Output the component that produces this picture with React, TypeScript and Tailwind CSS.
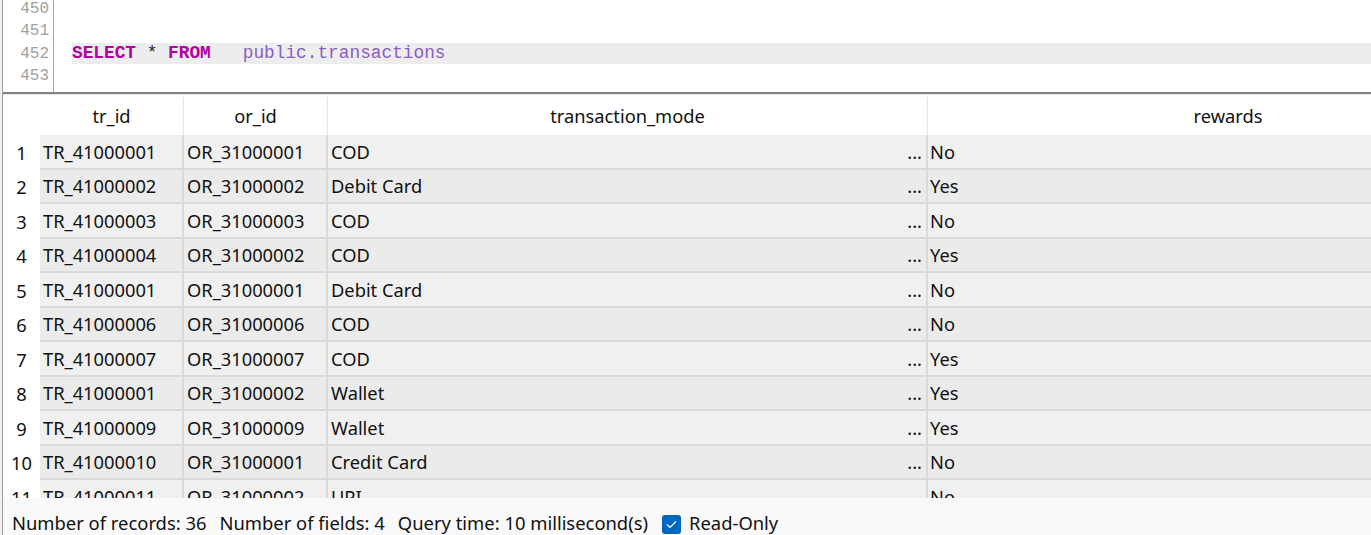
import React from "react";

type Row = {
  tr: string;
  or: string;
  mode: string;
  rewards: string;
};

const rows: Row[] = [
  { tr: "TR_41000001", or: "OR_31000001", mode: "COD", rewards: "No" },
  { tr: "TR_41000002", or: "OR_31000002", mode: "Debit Card", rewards: "Yes" },
  { tr: "TR_41000003", or: "OR_31000003", mode: "COD", rewards: "No" },
  { tr: "TR_41000004", or: "OR_31000002", mode: "COD", rewards: "Yes" },
  { tr: "TR_41000001", or: "OR_31000001", mode: "Debit Card", rewards: "No" },
  { tr: "TR_41000006", or: "OR_31000006", mode: "COD", rewards: "No" },
  { tr: "TR_41000007", or: "OR_31000007", mode: "COD", rewards: "Yes" },
  { tr: "TR_41000001", or: "OR_31000002", mode: "Wallet", rewards: "Yes" },
  { tr: "TR_41000009", or: "OR_31000009", mode: "Wallet", rewards: "Yes" },
  { tr: "TR_41000010", or: "OR_31000001", mode: "Credit Card", rewards: "No" },
  { tr: "TR_41000011", or: "OR_31000002", mode: "UPI", rewards: "No" },
];

const uiFont = { fontFamily: '"Noto Sans", "Open Sans", sans-serif' };
const monoFont = { fontFamily: '"Liberation Mono", "DejaVu Sans Mono", monospace' };

function Editor() {
  const lines = [450, 451, 452, 453];
  return (
    <div className="flex h-[94px] shrink-0 overflow-hidden border-b-2 border-[#828282] bg-white">
      {/* line numbers */}
      <div
        className="w-[51px] shrink-0 border-r border-[#a8a8a8] pr-[4px] text-right text-[16px] text-[#a0a0a0]"
        style={monoFont}
      >
        <div className="mt-[-2px]">
          <div className="h-[22px] leading-[22px]">{lines[0]}</div>
          <div className="h-[23px] leading-[23px]">{lines[1]}</div>
          <div className="h-[22px] leading-[22px]">{lines[2]}</div>
          <div className="h-[22px] leading-[22px]">{lines[3]}</div>
        </div>
      </div>
      {/* code */}
      <div className="flex-1 pl-[18px] text-[17.8px]" style={monoFont}>
        <div className="h-[43px]" />
        <div className="h-[21px] whitespace-pre bg-[#ededed] leading-[21px]">
          <span className="font-bold text-[#b4009e]">SELECT</span>
          <span className="text-[#222]"> * </span>
          <span className="font-bold text-[#b4009e]">FROM</span>
          <span>{"   "}</span>
          <span className="text-[#8a5cc4]">public.transactions</span>
        </div>
      </div>
    </div>
  );
}

function Grid() {
  return (
    <div className="flex-1 overflow-hidden border-t border-[#e6e6e6] pt-[2px]" style={uiFont}>
      {/* header */}
      <div className="flex h-[38px] bg-white text-[18.3px] text-[#111]">
        <div className="w-[37px] shrink-0" />
        <div className="flex w-[144px] shrink-0 items-center justify-center border-r border-[#e4e4e4]">tr_id</div>
        <div className="flex w-[144px] shrink-0 items-center justify-center border-r border-[#e4e4e4]">or_id</div>
        <div className="flex w-[600px] shrink-0 items-center justify-center border-r border-[#e4e4e4]">transaction_mode</div>
        <div className="flex w-[600px] shrink-0 items-center justify-center">rewards</div>
      </div>
      {/* rows */}
      {rows.map((r, i) => (
        <div key={i} className="flex h-[34.5px] text-[18.3px] text-[#111]">
          <div className="flex w-[37px] shrink-0 items-center justify-center bg-white">{i + 1}</div>
          <div
            className={`flex min-w-0 flex-1 border-b-2 border-[#dadada] ${
              i % 2 === 0 ? "bg-[#f0f0f0]" : "bg-[#ebebeb]"
            }`}
          >
            <div className="flex w-[144px] shrink-0 items-center border-r-2 border-[#dadada] pl-[3px]">{r.tr}</div>
            <div className="flex w-[144px] shrink-0 items-center border-r-2 border-[#dadada] pl-[3px]">{r.or}</div>
            <div className="flex w-[600px] shrink-0 items-center justify-between border-r-2 border-[#dadada] pl-[3px] pr-[4px]">
              <span>{r.mode}</span>
              <span>...</span>
            </div>
            <div className="flex flex-1 items-center pl-[2px]">{r.rewards}</div>
          </div>
        </div>
      ))}
    </div>
  );
}

function StatusBar() {
  return (
    <div
      className="flex h-[37px] shrink-0 items-start gap-[13px] bg-[#f9f9f9] pl-[9px] pt-[13px] text-[18.4px] leading-[24px] text-[#111]"
      style={uiFont}
    >
      <span>Number of records: 36</span>
      <span>Number of fields: 4</span>
      <span>Query time: 10 millisecond(s)</span>
      <label className="ml-[1px] flex items-center gap-[8px]">
        <span className="mt-[2px] flex h-[19px] w-[19px] items-center justify-center rounded-[3px] bg-[#0067c0]">
          <svg width="11" height="9" viewBox="0 0 11 9" fill="none">
            <path d="M1 4.5 L4 7.5 L10 1.5" stroke="white" strokeWidth="1.2" />
          </svg>
        </span>
        <span>Read-Only</span>
      </label>
    </div>
  );
}

export default function App() {
  return (
    <div className="h-[535px] w-full overflow-hidden bg-[#f0f0f0] pl-[2px]">
      <div className="flex h-full flex-col border-l border-[#a0a0a0] bg-white">
        <Editor />
        <Grid />
        <StatusBar />
      </div>
    </div>
  );
}
